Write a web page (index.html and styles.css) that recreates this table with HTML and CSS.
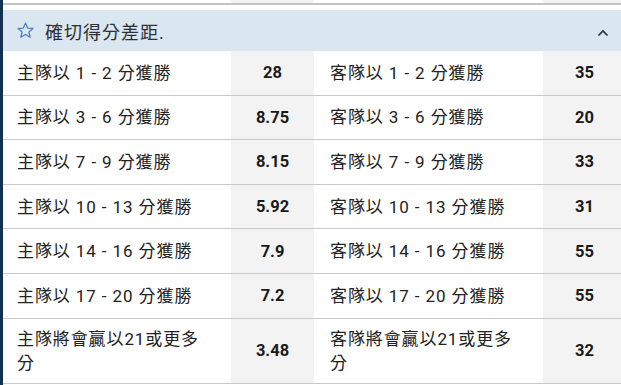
FILE: index.html
```html
<!DOCTYPE html>
<html lang="zh-Hant">
<head>
<meta charset="utf-8">
<link rel="stylesheet" href="styles.css">
</head>
<body>
<div class="page">
  <div class="prev">
    <div class="p-label"></div><div class="p-odds"></div><div class="p-label"></div><div class="p-odds"></div>
  </div>
  <div class="market">
    <div class="header">
      <svg class="star" width="19" height="19" viewBox="0 0 24 24"><path d="M12 2.8l2.75 6.1 6.65.62-5.02 4.43 1.48 6.52L12 17.1l-5.86 3.37 1.48-6.52-5.02-4.43 6.65-.62z" fill="none" stroke="#4f83c2" stroke-width="1.7" stroke-linejoin="round"/></svg>
      <span class="title">確切得分差距.</span>
      <svg class="chev" width="12" height="8" viewBox="0 0 12 8"><path d="M1.5 6.5L6 2l4.5 4.5" fill="none" stroke="#2b3340" stroke-width="1.7"/></svg>
    </div>
    <div class="row">
      <div class="label">主隊以 1 - 2 分獲勝</div><div class="odds">28</div>
      <div class="label">客隊以 1 - 2 分獲勝</div><div class="odds">35</div>
    </div>
    <div class="row">
      <div class="label">主隊以 3 - 6 分獲勝</div><div class="odds">8.75</div>
      <div class="label">客隊以 3 - 6 分獲勝</div><div class="odds">20</div>
    </div>
    <div class="row">
      <div class="label">主隊以 7 - 9 分獲勝</div><div class="odds">8.15</div>
      <div class="label">客隊以 7 - 9 分獲勝</div><div class="odds">33</div>
    </div>
    <div class="row">
      <div class="label">主隊以 10 - 13 分獲勝</div><div class="odds">5.92</div>
      <div class="label">客隊以 10 - 13 分獲勝</div><div class="odds">31</div>
    </div>
    <div class="row">
      <div class="label">主隊以 14 - 16 分獲勝</div><div class="odds">7.9</div>
      <div class="label">客隊以 14 - 16 分獲勝</div><div class="odds">55</div>
    </div>
    <div class="row">
      <div class="label">主隊以 17 - 20 分獲勝</div><div class="odds">7.2</div>
      <div class="label">客隊以 17 - 20 分獲勝</div><div class="odds">55</div>
    </div>
    <div class="row">
      <div class="label">主隊將會贏以21或更多分</div><div class="odds">3.48</div>
      <div class="label">客隊將會贏以21或更多分</div><div class="odds">32</div>
    </div>
  </div>
</div>
</body>
</html>
```
FILE: styles.css
```css
html, body {
  margin: 0;
  padding: 0;
  background: #ffffff;
  overflow: hidden;
}
body {
  font-family: Roboto, "Noto Sans CJK TC", sans-serif;
  color: #222;
}
.page {
  width: 626px;
  border-left: 3px solid #14324f;
  height: 385px;
  box-sizing: border-box;
}
.prev {
  display: grid;
  grid-template-columns: 228px 83px 229px 83px;
  height: 3px;
  border-bottom: 2px solid #c4c4c4;
  margin-bottom: 5px;
}
.p-odds { background: #f3f3f3; }
.header {
  display: flex;
  align-items: center;
  height: 41px;
  background: #dae6f0;
  padding-left: 13px;
  padding-right: 17px;
  box-sizing: border-box;
}
.title {
  margin-left: 10px;
  font-size: 18px;
  color: #2b2f36;
  letter-spacing: 1px;
}
.chev { margin-left: auto; margin-top: 4px; }
.row {
  display: grid;
  grid-template-columns: 228px 83px 229px 83px;
  min-height: 43.6px;
  border-bottom: 1px solid #c8c8c8;
}
.label {
  display: flex;
  align-items: center;
  padding: 8px 22px 8px 14px;
  font-size: 17px;
  line-height: 24px;
  letter-spacing: 0.9px;
  color: #222;
}
.label:nth-child(3) { padding-left: 16px; }
.odds {
  display: flex;
  align-items: center;
  justify-content: center;
  background: #f3f3f3;
  font-weight: 700;
  font-size: 16.5px;
  color: #1a1a1a;
}
```
